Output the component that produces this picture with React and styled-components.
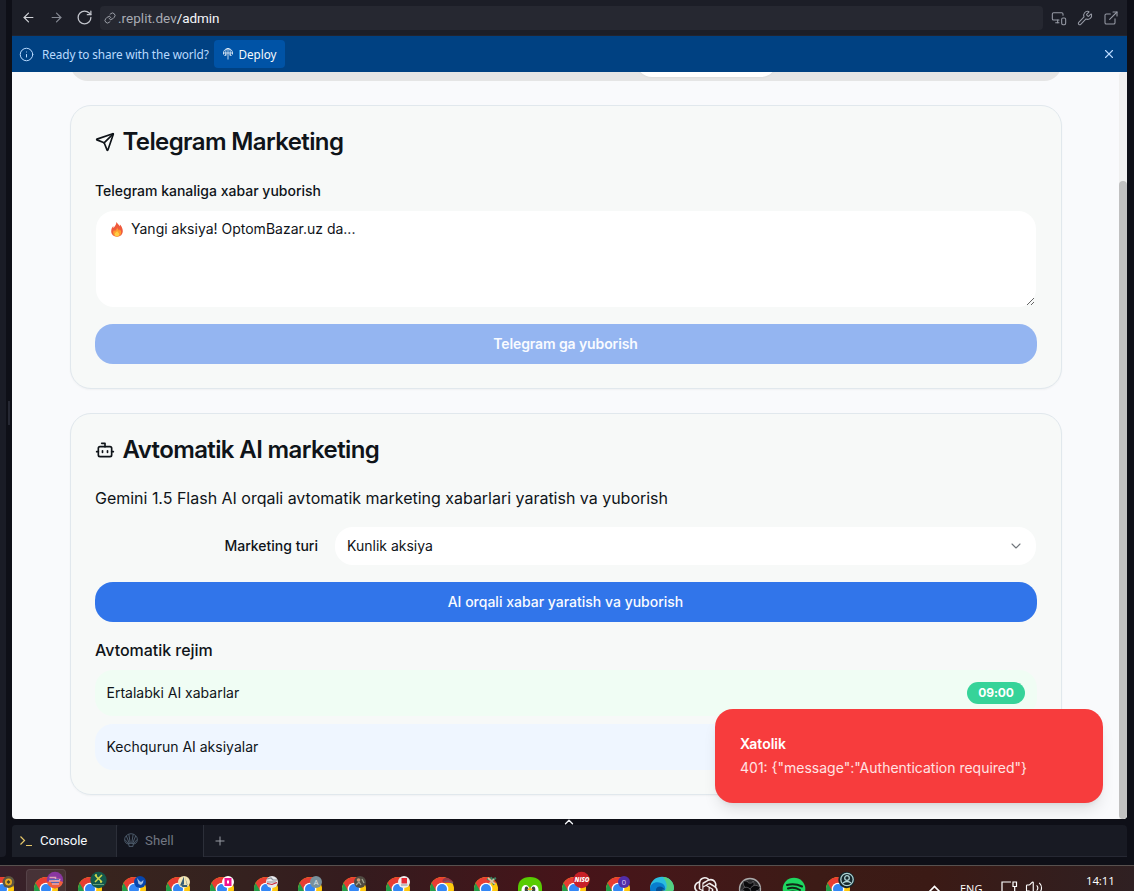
import React from 'react';
import styled, { createGlobalStyle } from 'styled-components';
import { ArrowLeft, ArrowRight, RotateCw, Link, MonitorSmartphone, Wrench, ExternalLink, Info, X, Send, Bot, ChevronDown, ChevronUp, Plus, Volume2 } from 'lucide-react';

const Global = createGlobalStyle`
  *{box-sizing:border-box}
  html,body{margin:0;background:#0e0f17;overflow:hidden}
  body{font-family:Inter,"Liberation Sans",sans-serif;color:#0f1419}
  button,textarea{font:inherit;border:0}
`;
const Desktop = styled.div`width:1134px;height:891px;display:flex;flex-direction:column;overflow:hidden;`;
const Workspace = styled.div`display:flex;height:865px;`;
const SideEdge = styled.div`width:6px;height:857px;background:#1a1c26;border-radius:0 0 4px 0;`;
const Gutter = styled.div`width:6px;display:flex;align-items:center;padding-left:2px;padding-bottom:39px;&::after{content:"";width:2px;height:24px;background:#262833;}`;
const Pane = styled.div`width:1115px;display:flex;flex-direction:column;font-family:"Noto Sans",sans-serif;`;
const Toolbar = styled.div`height:36px;background:#1c1e27;border-bottom:1px solid #22242f;display:flex;align-items:center;padding:0 8px 0 2px;color:#b5b8c0;`;
const NavButton = styled.button`width:28px;height:28px;flex:none;padding:0;background:none;display:flex;align-items:center;justify-content:center;color:${p => p.$color || '#c2c5cc'};`;
const Address = styled.div`width:943px;height:24px;flex:none;margin-left:2px;border-radius:4px;background:#262831;display:flex;align-items:center;padding-left:4px;gap:2px;font-family:Roboto,sans-serif;font-size:13.5px;color:#a8abb3;b{font-weight:400;color:#f5f7fa;letter-spacing:-.1px}`;
const UrlText = styled.span`white-space:nowrap;letter-spacing:.02px;`;
const Tools = styled.div`display:flex;color:#969aa5;margin-left:3px;`;
const Tool = styled.div`width:26px;display:flex;justify-content:center;`;
const Banner = styled.div`height:36px;background:#004182;display:flex;align-items:center;padding:0 11px 0 7px;color:#b9daff;font-size:11.8px;`;
const BannerText = styled.span`margin-left:8px;width:166px;white-space:nowrap;letter-spacing:-.12px;`;
const Deploy = styled.button`width:71px;height:28px;margin-left:6px;padding:0;border-radius:4px;background:#0053a6;color:#f5f9fc;display:flex;align-items:center;justify-content:center;gap:4px;font-size:11.7px;`;
const Push = styled.div`margin-left:auto;display:flex;`;
const Webview = styled.div`position:relative;height:747px;background:#f9fafc;border-radius:0 0 4px 4px;overflow:hidden;display:flex;font-family:Inter,sans-serif;`;
const Content = styled.div`width:1107px;padding:0 57px 0 58px;`;
const TabsEnd = styled.div`height:9px;display:flex;align-items:flex-end;overflow:hidden;`;
const TabsBar = styled.div`width:100%;height:40px;flex:none;padding:0 0 4px 566px;background:#e5e5e5;border-radius:18px;display:flex;align-items:stretch;`;
const ActiveTab = styled.div`width:141px;background:#fff;border-radius:16px;box-shadow:0 1px 2px #0000000a;`;
const Card = styled.section`height:${p => p.$height}px;margin-top:24px;padding:24px;border:1px solid #e1e8ed;border-radius:21px;background:#f7f9f8;box-shadow:0 1px 2px #0000000a;display:flex;flex-direction:column;`;
const Title = styled.h2`margin:0;height:24px;display:flex;align-items:center;gap:8px;font-size:24px;line-height:24px;font-weight:600;letter-spacing:-.62px;white-space:nowrap;`;
const TitleText = styled.span`margin-left:-.5px;`;
const FieldLabel = styled.label`font-size:14px;line-height:14px;font-weight:500;`;
const Compose = styled.div`margin-top:30px;display:flex;flex-direction:column;`;
const MessageWrap = styled.div`height:96px;margin:13px 1px 17px;padding:8px 12px;background:#fff;border-radius:18px;display:flex;font-size:14px;line-height:20px;position:relative;`;
const Fire = styled.svg`margin:3px 8px 0 3px;`;
const Resize = styled.svg`position:absolute;right:1px;bottom:1px;`;
const Primary = styled.button`height:40px;flex:none;padding:0 1px 2px 0;border-radius:18px;background:${p => p.$muted ? '#94b5f1' : '#3175ea'};color:#f9fbff;font-size:14px;font-weight:${p => p.$muted ? 600 : 500};letter-spacing:${p => p.$muted ? '-.11px' : '0'};`;
const Intro = styled.p`margin:24px 0 17px;font-size:16px;line-height:24px;height:24px;letter-spacing:-.015px;`;
const SelectRow = styled.div`display:grid;grid-template-columns:223px 701px;column-gap:17px;align-items:center;margin-bottom:17px;height:38px;`;
const RightLabel = styled(FieldLabel)`text-align:right;`;
const Select = styled.div`height:38px;border-radius:18px;background:#fff;display:flex;align-items:center;justify-content:space-between;padding:0 12px 1px;font-size:14px;svg{color:#70757b}`;
const Mode = styled.h4`margin:16px 0 8px;font-size:16px;font-weight:500;line-height:24px;letter-spacing:-.03px;`;
const Schedule = styled.div`height:46px;flex:none;margin-bottom:8px;padding:0 12px 0 11.5px;border-radius:18px;display:flex;align-items:center;justify-content:space-between;background:${p => p.$blue ? '#eff6ff' : '#f0fdf4'};font-size:14px;`;
const ScheduleName = styled.span`padding-bottom:2px;`;
const Time = styled.span`width:58px;height:22px;padding-bottom:1px;border-radius:11px;background:#36d399;color:#fff;display:flex;align-items:center;justify-content:center;font-size:12px;font-weight:700;letter-spacing:-.1px;`;
const ScrollTrack = styled.div`width:8px;background:#f0f0f0;padding-top:109px;border-radius:4px 0 0 0;`;
const Thumb = styled.div`height:638px;background:#c1c1c1;border-radius:4px;`;
const Toast = styled.div`position:absolute;left:703px;top:637px;width:388px;height:94px;padding:25px;border-radius:18px;background:#f73c3d;color:#fff;box-shadow:0 10px 15px -3px #0000001a,0 4px 6px -4px #0000001a;font-size:14px;line-height:20px;strong{display:block;font-weight:600;margin-bottom:4px}`;
const ToastText = styled.div`color:#ffe3e3;white-space:nowrap;`;
const Consoles = styled.div`position:relative;height:32px;margin-top:6px;background:#181a23;border-radius:4px 4px 0 0;border-bottom:1px solid #262833;display:flex;font-family:Roboto,sans-serif;font-size:13.2px;color:#727783;`;
const ConsoleTab = styled.div`width:${p => p.$width}px;height:32px;padding:0 1px 2px 7px;display:flex;align-items:center;gap:${p => p.$active ? 6 : 7}px;color:${p => p.$active ? '#f5f9fc' : '#727783'};background:${p => p.$active ? '#1c1f28' : '#13151e'};border-right:1px solid #2c2f39;border-radius:4px 0 0 0;letter-spacing:${p => p.$active ? '-.1px' : '.05px'};`;
const AddTab = styled.div`padding:9px 0 0 9px;color:#9a9da6;`;
const Collapse = styled.div`position:absolute;left:550px;top:-10px;color:#f5f7fa;`;
const Taskbar = styled.div`height:26px;background:linear-gradient(90deg,#38202b 0,#38241e 9%,#35221f 20%,#351b1e 32%,#471419 51%,#451719 58%,#3c1b16 72%,#3b1a15 82%,#2f2022 100%);border-top:1px solid #57504e;display:flex;overflow:hidden;color:#fff;font-family:"Open Sans",sans-serif;`;
const Apps = styled.div`display:flex;flex:none;margin-left:-20px;width:936px;`;
const AppSlot = styled.div`width:44px;height:40px;flex:none;padding:3px 2px;`;
const AppTile = styled.div`width:40px;height:40px;background:${p => p.$active ? '#ffffff14' : 'transparent'};border:1px solid ${p => p.$active ? '#ffffff14' : 'transparent'};border-radius:4px;svg{display:block;overflow:visible}`;
const Tray = styled.div`display:flex;flex:1;align-items:flex-start;padding-left:8px;`;
const Lang = styled.span`font-size:11px;line-height:15px;margin:15px 0 0 19px;width:24px;`;
const TrayIcon = styled.div`margin:${p => p.$top}px 0 0 ${p => p.$left}px;svg{display:block}`;
const Clock = styled.span`font-size:11.5px;line-height:16px;margin:7px 0 0 43px;letter-spacing:-.15px;white-space:nowrap;`;

const DeployIcon = () => <svg width="12" height="12" viewBox="0 0 12 12" fill="none" stroke="currentColor" strokeWidth=".8"><path d="M1.500 6.500V5a4.500 4.500 0 0 1 9 0v1.500M1.300 5h9.400M3.800 8V3.400C3.800 2 4.600.6 6 .6s2.200 1.400 2.200 2.800V8M6 .5v11M2.400 7.500l2-1M9.600 7.500l-2-1"/></svg>;
const FireIcon = () => <Fire width="12" height="15" viewBox="0 0 12 15"><path fill="#ef5a3c" d="M5.400 0c.7 1.700 2.600 2.400 3 4.200.4-.4.5-1 .5-1.600 1.700 1.500 2.900 4.300 2.900 6.400 0 3.500-2.400 5.700-5.800 5.700S.2 12.500.2 9.300c0-2.500 1.200-4.200 2.100-5.200v2C3.600 4.500 5.400 2.900 5.400 0Z"/><path fill="#ff9b2f" d="M6 5c.1 1.700 1.600 2.300 2 3.800.5-.5.5-1 .5-1.600 1.200 1 1.900 2.200 1.600 3.700-.3 2.300-1.900 3.500-4 3.500s-4-1.300-4-3.700c0-1.500.7-2.300 1.300-3v1.500C5 8.200 6.300 6.900 6 5Z"/><path fill="#ffcc45" d="M6.200 9c.1 1 2 1.700 2 3.300 0 1.200-.9 2.100-2.200 2.100S3.700 13.600 3.700 12.200c0-1.500 2-2 2.500-3.200Z"/></Fire>;
const ShellIcon = () => <svg width="14" height="14" viewBox="0 0 14 14" fill="none" stroke="#526273" strokeWidth=".9"><path d="M5 11.500 2 10C0 8 .3 4.500 2.300 2.800c2.500-2.700 7-2.700 9.400 0C13.700 4.500 14 8 12 10l-3 1.500v1.900H5v-1.900ZM5.600 11 2.300 2.800M6.400 11 4.800 1.200M7.600 11l1.600-9.800M8.400 11l3.300-8.200M5 11 .9 6.500M9 11l4.100-4.500"/></svg>;
const PromptIcon = () => <svg width="15" height="14" viewBox="0 0 15 14" fill="none" stroke="#e6c76a" strokeWidth="1.200"><path d="m1.500 3.500 4 4-4 4M7 12.500h6"/></svg>;
const TrayChevron = () => <svg width="13" height="8" viewBox="0 0 13 8" fill="none" stroke="white" strokeWidth="1.600"><path d="m1 7 5.500-5.500L12 7"/></svg>;

function Chrome() {
  return <g><circle cx="19" cy="19" r="12" fill="#ffc90d"/><path d="M19 19 9.100 12.200A12 12 0 0 0 17 30.800Z" fill="#249b49"/><path d="M8.600 13A12 12 0 0 1 29.400 13H19l-5.200 9Z" fill="#e83d32"/><circle cx="19" cy="19" r="6.300" fill="#fff"/><circle cx="19" cy="19" r="5" fill="#3386f4"/></g>;
}
const badges = {
  gold: <g><circle cx="25.500" cy="12" r="6" fill="#5b5543"/><circle cx="25.500" cy="12" r="3.500" fill="#e8ab20"/><path d="m23.500 12 2-2 2 2-2 2Z" fill="#49422f"/></g>,
  sunset: <g><circle cx="28" cy="10" r="8.200" fill="#8937a0"/><path d="M20 12a8.200 8.200 0 0 0 16 0l-8-3Z" fill="#f0603c"/><path d="M22.500 7.500h6v2h5M22 11h11M25 14h7" fill="none" stroke="#dba5b8" strokeWidth="1.500"/><path d="M22 9.500h10M24 12.500h8" stroke="#5265b4" strokeWidth="1"/></g>,
  green: <g><circle cx="27.500" cy="10" r="8.200" fill="#14594c"/><path d="m24 5 3.500 4M31 5l-7 7M28 9l3 3M24 5h2M29 12h2" stroke="#d0d74b" strokeWidth="1.500"/><path d="M22 14.500h11" stroke="#659e79"/></g>,
  blue: <g><circle cx="25" cy="12" r="6" fill="#0646ae"/><path d="m22 8 2.500 3 1.500 1 2.500-2-.5 3-2 2-2.500-1Z" fill="#a3c2e5"/></g>,
  sail: <g><circle cx="25" cy="12" r="6" fill="#f2e5b4"/><path d="M25 6.500v8l-4 1ZM26 7l2.500 8h-7l2 2h5" fill="#365e78"/></g>,
  pink: <g><circle cx="25" cy="12" r="6" fill="#fff"/><path d="M21.500 8h7v8h-7Z" fill="#f1128f"/><path d="M24 10.500h2v3h-2Z" fill="#fff"/></g>,
  cars: <g><circle cx="25" cy="12" r="6" fill="#e8e9ed"/><path d="m20 9 4-1 2 2h4M20 12h9" fill="none" stroke="#8b939c" strokeWidth="1.200"/><path d="m20 13.500 5 1 5-2" fill="none" stroke="#cf2432" strokeWidth="1.200"/></g>,
  letter: <g><circle cx="25" cy="12" r="6" fill="#78909c"/><text x="25" y="14.700" textAnchor="middle" fontSize="7.500" fill="#dce3e8">A</text></g>,
  people: <g><circle cx="25" cy="12" r="6" fill="#504b42"/><circle cx="23.500" cy="10" r="1.800" fill="#cc9d78"/><path d="m21 15 3-3 2 3M27 9l2 4" fill="none" stroke="#a2a491" strokeWidth="1.300"/></g>,
  red: <g><circle cx="25" cy="12" r="6" fill="#eee"/><path d="M22.500 8h5.500v5.500h-5.500Z" fill="#e52934"/><path d="M22 15h6.500" stroke="#8a9093"/></g>,
  swoosh: <g><path d="M19.500 10c3-4 7-2 11 2l-6-1-5 1Z" fill="#963847"/><path d="m21 12 4-1 5 2" fill="none" stroke="#7b5a65" strokeWidth="1.500"/></g>,
  palm: <g><path d="m20 9 5 1 4-2M25 10l-1-3M25 10l2 5" fill="none" stroke="#397f60" strokeWidth="2"/><path d="m21 8 7 6M22 14l5-5" stroke="#d4c19c" strokeWidth="1.700"/></g>,
  niso: <g><circle cx="26.500" cy="10" r="8.200" fill="#c82028"/><text x="27" y="12" textAnchor="middle" fontSize="6.200" fontWeight="800" fontStyle="italic" fill="#fff">NiSO</text></g>,
  zero: <g><circle cx="25" cy="12" r="6" fill="#512da8"/><text x="25" y="14.700" textAnchor="middle" fontSize="7.500" fill="#ddd2fb">0</text></g>,
  profile: <g><circle cx="27.500" cy="10" r="8.200" fill="#14262b"/><g fill="none" stroke="#aed2d4" strokeWidth="1.300"><circle cx="28" cy="9.500" r="6.200"/><circle cx="28" cy="8" r="2.300"/><path d="M24 13c2-2 6-2 8 0"/></g></g>,
};
function AppIcon({ kind }) {
  let art;
  if (kind === 'owl') art = <g><path d="M7 18c0-7 4-11 12-11s12 4 12 11v13H7Z" fill="#58cc02"/><ellipse cx="14.500" cy="20" rx="4" ry="5" fill="#fff"/><ellipse cx="23.500" cy="20" rx="4" ry="5" fill="#fff"/><ellipse cx="15.500" cy="19.500" rx="1.800" ry="3" fill="#3e4741"/><ellipse cx="22.500" cy="19.500" rx="1.800" ry="3" fill="#3e4741"/><path d="m16 20 3-3 3 3Z" fill="#ffb019"/></g>;
  else if (kind === 'edge') art = <g><path d="M7 18C8 3 30 3 31 18c0 5-6 6-9 3l-15-3Z" fill="#2bbde0"/><path d="M20 7c7 0 11 6 11 11 0 5-6 6-9 3 3-4 2-9-2-14Z" fill="#54d080"/><path d="M7 18c1-5 6-7 11-5 3 1 5 4 4 7-2-2-5-2-6 1v9C10 29 7 24 7 18Z" fill="#087dce"/><path d="M13 19c2-4 7-3 9 1-3-1-5 1-4 4l-5 2Z" fill="#064e93"/></g>;
  else if (kind === 'gpt') art = <g transform="translate(7 7)" fill="#f1eeee"><path d="M22.280 9.820a5.980 5.980 0 0 0-.52-4.910 6.050 6.050 0 0 0-6.510-2.900A6.070 6.070 0 0 0 4.980 4.180a5.980 5.980 0 0 0-4 2.900 6.050 6.050 0 0 0 .74 7.100 5.980 5.980 0 0 0 .51 4.910 6.050 6.050 0 0 0 6.510 2.900A5.980 5.980 0 0 0 13.260 24a6.060 6.060 0 0 0 5.770-4.210 5.990 5.990 0 0 0 4-2.900 6.060 6.060 0 0 0-.75-7.070ZM13.260 22.430a4.480 4.480 0 0 1-2.880-1.040l.14-.08 4.780-2.760a.79.79 0 0 0 .39-.68v-6.740l2.020 1.170v5.600a4.500 4.500 0 0 1-4.450 4.530ZM3.600 18.300a4.470 4.470 0 0 1-.53-3.010l.14.090 4.780 2.760a.77.77 0 0 0 .78 0l5.840-3.370v2.330l-4.870 2.820A4.500 4.500 0 0 1 3.600 18.300ZM2.340 7.900a4.490 4.490 0 0 1 2.370-1.980v5.680c0 .28.150.54.390.68l5.810 3.350-2.020 1.170-4.890-2.780A4.500 4.500 0 0 1 2.340 7.900Zm16.600 3.860-5.840-3.390 2.020-1.160 4.880 2.780a4.490 4.490 0 0 1-.68 8.100v-5.680a.79.79 0 0 0-.38-.65Zm2.010-3.020-.14-.09-4.770-2.780a.78.78 0 0 0-.79 0L9.410 9.230V6.900l4.880-2.820a4.500 4.500 0 0 1 6.660 4.660ZM8.310 12.860l-2.020-1.160V6.070a4.500 4.500 0 0 1 7.380-3.450l-.14.080-4.780 2.760a.79.79 0 0 0-.39.680Zm1.100-2.370 2.600-1.500 2.610 1.500v3l-2.600 1.500-2.610-1.500Z"/></g>;
  else if (kind === 'obs') art = <g><circle cx="19" cy="19" r="10.500" fill="#29292b" stroke="#aaa" strokeWidth="1.300"/>{[0,120,240].map(a => <path key={a} transform={`rotate(${a} 19 19)`} d="M12.500 11c-1 5 2 8 6.500 8 4-1 5-5 3-8 0 3-5 3-6 0Z" fill="#09090b" stroke="#78787c" strokeWidth=".6"/>)}</g>;
  else if (kind === 'spotify') art = <g fill="none" stroke="#102918" strokeLinecap="round"><circle cx="19" cy="19" r="11.300" fill="#1ed760" stroke="none"/><path d="M12 15c5-1.500 10-1 15 1.500M13 18.500c4-1.300 8-.8 12 1.500M14 22c4-1 7-.5 10 1" strokeWidth="2"/></g>;
  else art = <g><Chrome />{badges[kind]}</g>;
  return <svg width="38" height="38" viewBox="0 0 38 38">{art}</svg>;
}
const apps = ['gold','sunset','green','blue','sail','pink','cars','letter','people','red','swoosh','palm','owl','niso','zero','edge','gpt','obs','spotify','profile'];

export default function App() {
  return <><Global/><Desktop>
    <Workspace><SideEdge/><Gutter/><Pane>
      <Toolbar>
        <NavButton $color="#d0d2d7"><ArrowLeft size={15} strokeWidth={1.900}/></NavButton><NavButton $color="#858993"><ArrowRight size={15} strokeWidth={1.900}/></NavButton><NavButton><RotateCw size={17} strokeWidth={1.800}/></NavButton>
        <Address><Link size={12} strokeWidth={1.800}/><UrlText>.replit.dev<b>/admin</b></UrlText></Address>
        <Tools><Tool><MonitorSmartphone size={16} strokeWidth={1.600}/></Tool><Tool><Wrench size={16} strokeWidth={1.600}/></Tool><Tool><ExternalLink size={16} strokeWidth={1.600}/></Tool></Tools>
      </Toolbar>
      <Banner><Info size={15} strokeWidth={1.600}/><BannerText>Ready to share with the world?</BannerText><Deploy><DeployIcon/>Deploy</Deploy><Push><X size={14} strokeWidth={1.900}/></Push></Banner>
      <Webview><Content><TabsEnd><TabsBar><ActiveTab/></TabsBar></TabsEnd>
        <Card $height={284}><Title><Send size={20}/><TitleText>Telegram Marketing</TitleText></Title><Compose><FieldLabel>Telegram kanaliga xabar yuborish</FieldLabel><MessageWrap><FireIcon/>Yangi aksiya! OptomBazar.uz da...<Resize width="9" height="9" viewBox="0 0 9 9" stroke="#555" strokeWidth=".9"><path d="m1 8 7-7M5 8l3-3"/></Resize></MessageWrap><Primary $muted>Telegram ga yuborish</Primary></Compose></Card>
        <Card $height={382}><Title><Bot size={20}/><TitleText>Avtomatik AI marketing</TitleText></Title><Intro>Gemini 1.5 Flash AI orqali avtomatik marketing xabarlari yaratish va yuborish</Intro><SelectRow><RightLabel>Marketing turi</RightLabel><Select>Kunlik aksiya<ChevronDown size={16} strokeWidth={1.600}/></Select></SelectRow><Primary>AI orqali xabar yaratish va yuborish</Primary><Mode>Avtomatik rejim</Mode><Schedule><ScheduleName>Ertalabki AI xabarlar</ScheduleName><Time>09:00</Time></Schedule><Schedule $blue><ScheduleName>Kechqurun AI aksiyalar</ScheduleName></Schedule></Card>
      </Content><ScrollTrack><Thumb/></ScrollTrack><Toast><strong>Xatolik</strong><ToastText>401: {'{"message":"Authentication required"}'}</ToastText></Toast></Webview>
      <Consoles><ConsoleTab $active $width={105}><PromptIcon/>Console</ConsoleTab><ConsoleTab $width={87}><ShellIcon/>Shell</ConsoleTab><AddTab><Plus size={14} strokeWidth={1.700}/></AddTab><Collapse><ChevronUp size={14} strokeWidth={2.200}/></Collapse></Consoles>
    </Pane></Workspace>
    <Taskbar><Apps>{apps.map((kind, i) => <AppSlot key={kind}><AppTile $active={i === 1}><AppIcon kind={kind}/></AppTile></AppSlot>)}</Apps><Tray><TrayIcon $top={19} $left={4}><TrayChevron/></TrayIcon><Lang>ENG</Lang><TrayIcon $top={15} $left={17}><svg width="17" height="13" viewBox="0 0 17 13" fill="none" stroke="white" strokeWidth="1.200"><path d="M10 1H1v10h12M12 1h3.500v4.500H12ZM13.700 6v6"/></svg></TrayIcon><TrayIcon $top={13} $left={7}><Volume2 size={18} strokeWidth={1.500}/></TrayIcon><Clock>14:11</Clock></Tray></Taskbar>
  </Desktop></>;
}
